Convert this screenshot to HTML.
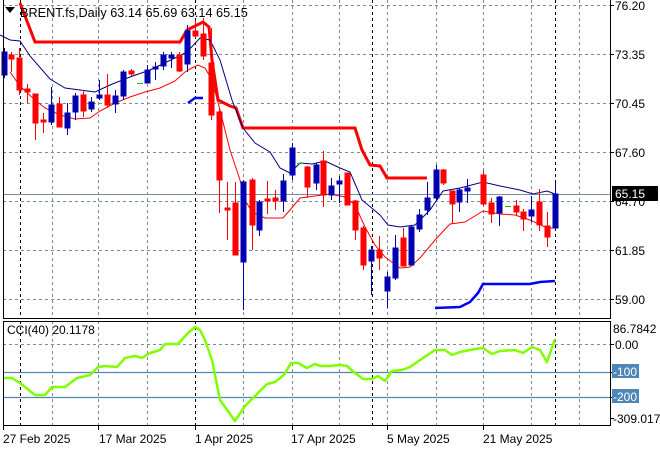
<!DOCTYPE html>
<html><head><meta charset="utf-8"><style>
html,body{margin:0;padding:0;background:#fff}
svg{display:block}
text{font-family:"Liberation Sans","DejaVu Sans",sans-serif;font-size:12px;fill:#000}
</style></head><body>
<svg width="660" height="450" viewBox="0 0 660 450" xmlns="http://www.w3.org/2000/svg">
<rect width="660" height="450" fill="#fff"/>
<g stroke="#7f8a96" stroke-width="1" stroke-dasharray="3,3" fill="none">
<path d="M3 5.5H610M3 54.5H610M3 103.5H610M3 152.5H610M3 201.5H610M3 250.5H610M3 299.5H610"/>
<path d="M52.5 0V318M98.5 0V318M147.5 0V318M243.5 0V318M292.5 0V318M339.5 0V318M387.5 0V318M436.5 0V318M483.5 0V318M531.5 0V318M579.5 0V318"/>
<path d="M52.5 321V425M98.5 321V425M147.5 321V425M243.5 321V425M292.5 321V425M339.5 321V425M387.5 321V425M436.5 321V425M483.5 321V425M531.5 321V425M579.5 321V425"/>
<path d="M3 344.5H610"/>
</g>
<g stroke="#000" stroke-width="1" stroke-dasharray="3,3">
<path d="M20.5 0V318M195.5 0V318M372.5 0V318M555.5 0V318M20.5 321V425M195.5 321V425M372.5 321V425M555.5 321V425"/>
</g>
<path d="M3 194.5H610" stroke="#7d8da0" stroke-width="1"/>
<path d="M3 372.5H610M3 397.5H610" stroke="#4f86b8" stroke-width="1.2"/>
<polyline fill="none" stroke="#f00" stroke-width="3" points="20,3 35,42 180,42 187,30 203,22 209,27 212,60 218,100 230,106 236,108 243,128 355,128 362,150 370,165 380,166 387,178 427,178"/>
<polyline fill="none" stroke="#00f" stroke-width="2.5" points="188,103 195,98 203,98"/>
<polyline fill="none" stroke="#00f" stroke-width="2.5" points="435,308 460,307 470,302 478,293 483,284 530,284 540,282 555,281"/>
<polyline fill="none" stroke="#000080" stroke-width="1" points="0,35 10,40 20,41 30,56 50,79 65,88 80,90 95,92 110,85 130,77 150,70 175,58 187,52 200,38 210,40 220,60 232,100 243,128 255,143 270,152 280,168 290,173 300,163 312,164 325,161 340,168 350,172 362,200 380,215 388,225 400,227 415,225 430,210 443,191 460,188 483,182 500,186 520,190 533,194 547,191 555,194"/>
<polyline fill="none" stroke="#f00" stroke-width="1" points="10,72 20,86 35,100 45,108 60,115 75,119 90,118 100,111 115,103 130,97 145,92 160,88 175,81 185,72 190,69 198,65 205,68 212,80 220,110 230,150 240,180 245,200 252,212 265,218 283,218 290,210 300,198 315,196 330,194 345,197 355,205 365,227 375,245 385,257 400,268 410,267 420,258 435,240 450,224 465,222 483,211 500,214 515,215 530,220 547,228 555,228"/>
<g stroke="#0000b0" fill="#0000b0">
<path d="M4.5 48V78M51.5 87V125M67.5 103V135M75.5 93V120M91.5 97V112M99.5 80V100M115.5 90V113M123.5 70V100M147.5 65V83M155.5 62V80M163.5 52V70M171.5 52V68M187.5 25V72M243.5 180V310M259.5 200V236M283.5 174V212M292.5 143V180M316.5 163V190M331.5 178V200M339.5 176V203M371.5 246V295M387.5 272V308M395.5 235V280M411.5 225V266M419.5 209V232M427.5 182V215M436.5 165V200M459.5 188V212M467.5 179V203M499.5 196V226M531.5 196V222M555.5 183V229" fill="none"/>
<rect x="2" y="52" width="5" height="23"/><rect x="49" y="105" width="5" height="17"/><rect x="65" y="113" width="5" height="15"/><rect x="73" y="96" width="5" height="16"/><rect x="89" y="102" width="5" height="7"/><rect x="97" y="95" width="5" height="3"/><rect x="113" y="96" width="5" height="8"/><rect x="121" y="72" width="5" height="24"/><rect x="145" y="70" width="5" height="13"/><rect x="153" y="67" width="5" height="2"/><rect x="161" y="55" width="5" height="11"/><rect x="169" y="55" width="5" height="3"/><rect x="185" y="31" width="5" height="33"/><rect x="241" y="182" width="5" height="80"/><rect x="257" y="202" width="5" height="28"/><rect x="281" y="181" width="5" height="20"/><rect x="290" y="148" width="5" height="27"/><rect x="314" y="165" width="5" height="18"/><rect x="329" y="186" width="5" height="9"/><rect x="337" y="181" width="5" height="3"/><rect x="369" y="250" width="5" height="11"/><rect x="385" y="277" width="5" height="14"/><rect x="393" y="248" width="5" height="30"/><rect x="409" y="227" width="5" height="38"/><rect x="417" y="215" width="5" height="14"/><rect x="425" y="198" width="5" height="12"/><rect x="434" y="170" width="5" height="28"/><rect x="457" y="190" width="5" height="12"/><rect x="465" y="188" width="5" height="3"/><rect x="497" y="197" width="5" height="16"/><rect x="529" y="210" width="5" height="6"/><rect x="553" y="194" width="5" height="34"/>
</g>
<g stroke="#f00" fill="#f00">
<path d="M11.5 52V72M19.5 48V95M27.5 84V103M35.5 94V140M43.5 113V133M59.5 97V127M83.5 90V117M107.5 74V108M131.5 69V76M179.5 52V72M195.5 20V38M203.5 18V60M211.5 28V120M219.5 108V213M227.5 182V240M235.5 182V255M252.5 178V250M267.5 181V214M275.5 190V210M307.5 166V198M323.5 151V207M347.5 173V205M355.5 200V240M363.5 226V270M379.5 236V270M403.5 228V266M443.5 169V185M452.5 191V224M483.5 170V206M491.5 198V223M516.5 200V215M523.5 209V231M539.5 189V231M547.5 212V247" fill="none"/>
<rect x="9" y="55" width="5" height="4"/><rect x="17" y="58" width="5" height="32"/><rect x="25" y="89" width="5" height="3"/><rect x="33" y="94" width="5" height="29"/><rect x="41" y="120" width="5" height="2"/><rect x="57" y="104" width="5" height="23"/><rect x="81" y="95" width="5" height="16"/><rect x="105" y="95" width="5" height="10"/><rect x="129" y="71" width="5" height="3"/><rect x="177" y="55" width="5" height="16"/><rect x="193" y="31" width="5" height="5"/><rect x="201" y="34" width="5" height="22"/><rect x="209" y="63" width="5" height="52"/><rect x="217" y="112" width="5" height="68"/><rect x="225" y="208" width="5" height="2"/><rect x="233" y="203" width="5" height="52"/><rect x="250" y="180" width="5" height="45"/><rect x="265" y="199" width="5" height="2"/><rect x="273" y="198" width="5" height="3"/><rect x="305" y="167" width="5" height="20"/><rect x="321" y="161" width="5" height="34"/><rect x="345" y="173" width="5" height="32"/><rect x="353" y="201" width="5" height="29"/><rect x="361" y="228" width="5" height="37"/><rect x="377" y="250" width="5" height="8"/><rect x="401" y="238" width="5" height="28"/><rect x="441" y="170" width="5" height="13"/><rect x="450" y="191" width="5" height="13"/><rect x="481" y="175" width="5" height="29"/><rect x="489" y="203" width="5" height="11"/><rect x="514" y="206" width="5" height="6"/><rect x="521" y="212" width="5" height="7"/><rect x="537" y="202" width="5" height="23"/><rect x="545" y="226" width="5" height="11"/>
</g>
<path d="M137 83.5H143M297 163.5H303M505 206.5H511" stroke="#00c000" stroke-width="1"/>
<polyline fill="none" stroke="#7fff00" stroke-width="2.5" stroke-linejoin="round" points="3,378 12,378 20,383 35,395 45,395 52,387 65,387 77,378 90,375 98,367 105,366 117,367 125,358 135,356 142,358 150,353 160,350 165,344 178,344 188,333 195,327 200,330 205,340 212,360 220,400 235,421 245,406 255,396 267,384 275,382 284,375 291,363 298,363 307,368 315,364 320,366 330,366 340,365 347,366 355,373 363,379 372,379 378,376 385,381 392,371 402,370 410,367 420,360 435,350 445,350 452,355 460,352 475,349 483,348 492,354 500,351 515,350 523,353 532,347 540,350 547,362 555,339"/>
<path d="M3.5 0V318.5H610.5V0M3.5 321.5H610.5V425.5H3.5Z" fill="none" stroke="#000" stroke-width="1"/>
<g stroke="#000"><path d="M610 5.5h4M610 54.5h4M610 103.5h4M610 152.5h4M610 201.5h4M610 250.5h4M610 299.5h4M610 344.5h4M610 372.5h4M610 397.5h4M610 418.5h4M3.5 426v4M98.5 426v4M195.5 426v4M292.5 426v4M387.5 426v4M483.5 426v4"/></g>
<path d="M5 7h10l-5 6z" fill="#000"/>
<text x="20" y="17" style="font-size:12.7px">BRENT.fs,Daily  63.14 65.69 63.14 65.15</text>
<text x="7" y="334">CCI(40) 20.1178</text>
<text x="615" y="10">76.20</text>
<text x="615" y="59">73.35</text>
<text x="615" y="108">70.45</text>
<text x="615" y="157">67.60</text>
<text x="615" y="206">64.70</text>
<text x="615" y="255">61.85</text>
<text x="615" y="304">59.00</text>
<rect x="612" y="186" width="46" height="15" fill="#000"/>
<text x="615" y="198" style="fill:#fff">65.15</text>
<text x="613" y="333">86.7842</text>
<text x="615" y="349">0.00</text>
<rect x="612" y="364" width="27" height="14" fill="#4f86b8"/>
<text x="613" y="376" style="fill:#fff">-100</text>
<rect x="612" y="389" width="27" height="14" fill="#4f86b8"/>
<text x="613" y="401" style="fill:#fff">-200</text>
<text x="613" y="423">-309.017</text>
<text x="3" y="443">27 Feb 2025</text>
<text x="99" y="443">17 Mar 2025</text>
<text x="195" y="443">1 Apr 2025</text>
<text x="291" y="443">17 Apr 2025</text>
<text x="387" y="443">5 May 2025</text>
<text x="483" y="443">21 May 2025</text>
</svg>
</body></html>
